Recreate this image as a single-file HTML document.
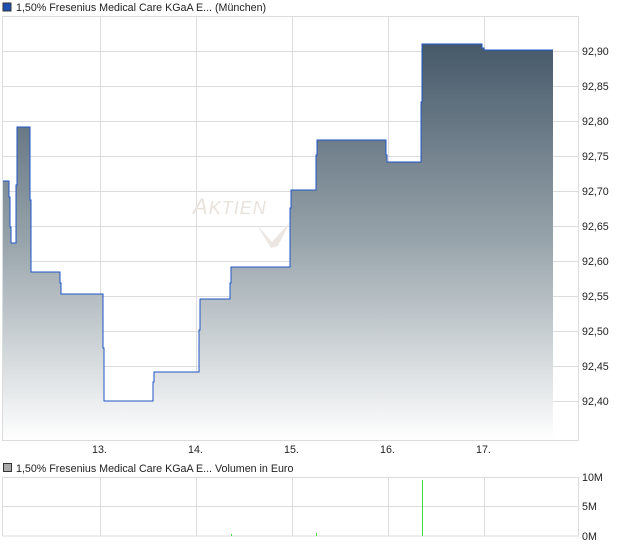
<!DOCTYPE html>
<html><head><meta charset="utf-8"><style>
body{margin:0;background:#fff;width:620px;height:546px;overflow:hidden;font-family:"Liberation Sans",sans-serif}
</style></head><body>
<svg width="620" height="546" xmlns="http://www.w3.org/2000/svg" font-family="Liberation Sans, sans-serif" font-size="10.7">
<defs><linearGradient id="g" x1="0" y1="44" x2="0" y2="440" gradientUnits="userSpaceOnUse">
<stop offset="0" stop-color="#46596a"/><stop offset="0.5" stop-color="#98a4ab"/><stop offset="1" stop-color="#ffffff"/></linearGradient></defs>
<rect x="3" y="3" width="8" height="8" fill="#1f4fb0" stroke="#333" stroke-width="1"/>
<text x="16" y="11" fill="#222">1,50% Fresenius Medical Care KGaA E... (München)</text>
<g stroke="#dcdcdc" stroke-width="1">
<line x1="3" y1="51.5" x2="579" y2="51.5"/><line x1="3" y1="86.5" x2="579" y2="86.5"/><line x1="3" y1="121.5" x2="579" y2="121.5"/><line x1="3" y1="156.5" x2="579" y2="156.5"/><line x1="3" y1="191.5" x2="579" y2="191.5"/><line x1="3" y1="226.5" x2="579" y2="226.5"/><line x1="3" y1="261.5" x2="579" y2="261.5"/><line x1="3" y1="296.5" x2="579" y2="296.5"/><line x1="3" y1="331.5" x2="579" y2="331.5"/><line x1="3" y1="366.5" x2="579" y2="366.5"/><line x1="3" y1="401.5" x2="579" y2="401.5"/>
<line x1="100.5" y1="16" x2="100.5" y2="440"/><line x1="196.5" y1="16" x2="196.5" y2="440"/><line x1="292.5" y1="16" x2="292.5" y2="440"/><line x1="388.5" y1="16" x2="388.5" y2="440"/><line x1="484.5" y1="16" x2="484.5" y2="440"/>
<rect x="2.5" y="16.5" width="576" height="424" fill="none"/>
</g>
<text x="193" y="214" font-size="22" font-style="italic" fill="#e8e2dc" letter-spacing="1">A<tspan font-size="18">KTIEN</tspan></text>
<path d="M257 225 L272 242 L290 222 L278 246 L271 248 Z" fill="#ebe6e2"/>
<path d="M3 440 L3 181 L9 181 L9 197 L10 197 L10 227 L11 227 L11 243 L16 243 L16 185 L17 185 L17 127 L30 127 L30 200 L31 200 L31 272 L60 272 L60 283 L61 283 L61 294 L103 294 L103 348 L104 348 L104 401 L153 401 L153 382 L154 382 L154 372 L199 372 L199 330 L200 330 L200 299 L230 299 L230 283 L231 283 L231 267 L290 267 L290 208 L291 208 L291 190 L316 190 L316 155 L317 155 L317 140 L386 140 L386 155 L387 155 L387 162 L421 162 L421 102 L422 102 L422 44 L482 44 L482 48 L484 48 L484 50 L553 50 L553 440 Z" fill="url(#g)"/>
<path d="M3 181 L9 181 L9 197 L10 197 L10 227 L11 227 L11 243 L16 243 L16 185 L17 185 L17 127 L30 127 L30 200 L31 200 L31 272 L60 272 L60 283 L61 283 L61 294 L103 294 L103 348 L104 348 L104 401 L153 401 L153 382 L154 382 L154 372 L199 372 L199 330 L200 330 L200 299 L230 299 L230 283 L231 283 L231 267 L290 267 L290 208 L291 208 L291 190 L316 190 L316 155 L317 155 L317 140 L386 140 L386 155 L387 155 L387 162 L421 162 L421 102 L422 102 L422 44 L482 44 L482 48 L484 48 L484 50 L553 50" fill="none" stroke="#1f56c4" stroke-width="1"/>
<g fill="#222">
<text x="582" y="55">92,90</text><text x="582" y="90">92,85</text><text x="582" y="125">92,80</text><text x="582" y="160">92,75</text><text x="582" y="195">92,70</text><text x="582" y="230">92,65</text><text x="582" y="265">92,60</text><text x="582" y="300">92,55</text><text x="582" y="335">92,50</text><text x="582" y="370">92,45</text><text x="582" y="405">92,40</text>
<text x="92" y="453">13.</text><text x="188" y="453">14.</text><text x="284" y="453">15.</text><text x="380" y="453">16.</text><text x="476" y="453">17.</text>
</g>
<rect x="3.5" y="463.5" width="8" height="8" fill="#aaa" stroke="#333" stroke-width="1"/>
<text x="16" y="472" fill="#222">1,50% Fresenius Medical Care KGaA E... Volumen in Euro</text>
<g stroke="#dcdcdc" stroke-width="1">
<line x1="3" y1="506.5" x2="579" y2="506.5"/>
<line x1="100.5" y1="477" x2="100.5" y2="536"/><line x1="196.5" y1="477" x2="196.5" y2="536"/><line x1="292.5" y1="477" x2="292.5" y2="536"/><line x1="388.5" y1="477" x2="388.5" y2="536"/><line x1="484.5" y1="477" x2="484.5" y2="536"/>
<rect x="2.5" y="477.5" width="576" height="58.5" fill="none"/>
</g>
<g stroke="#44dd44" stroke-width="1"><line x1="422.5" y1="480" x2="422.5" y2="536"/><line x1="231.5" y1="534" x2="231.5" y2="536"/><line x1="316.5" y1="533" x2="316.5" y2="536"/></g>
<g fill="#222"><text x="582" y="481">10M</text><text x="582" y="510">5M</text><text x="582" y="540">0M</text></g>
</svg>
</body></html>
